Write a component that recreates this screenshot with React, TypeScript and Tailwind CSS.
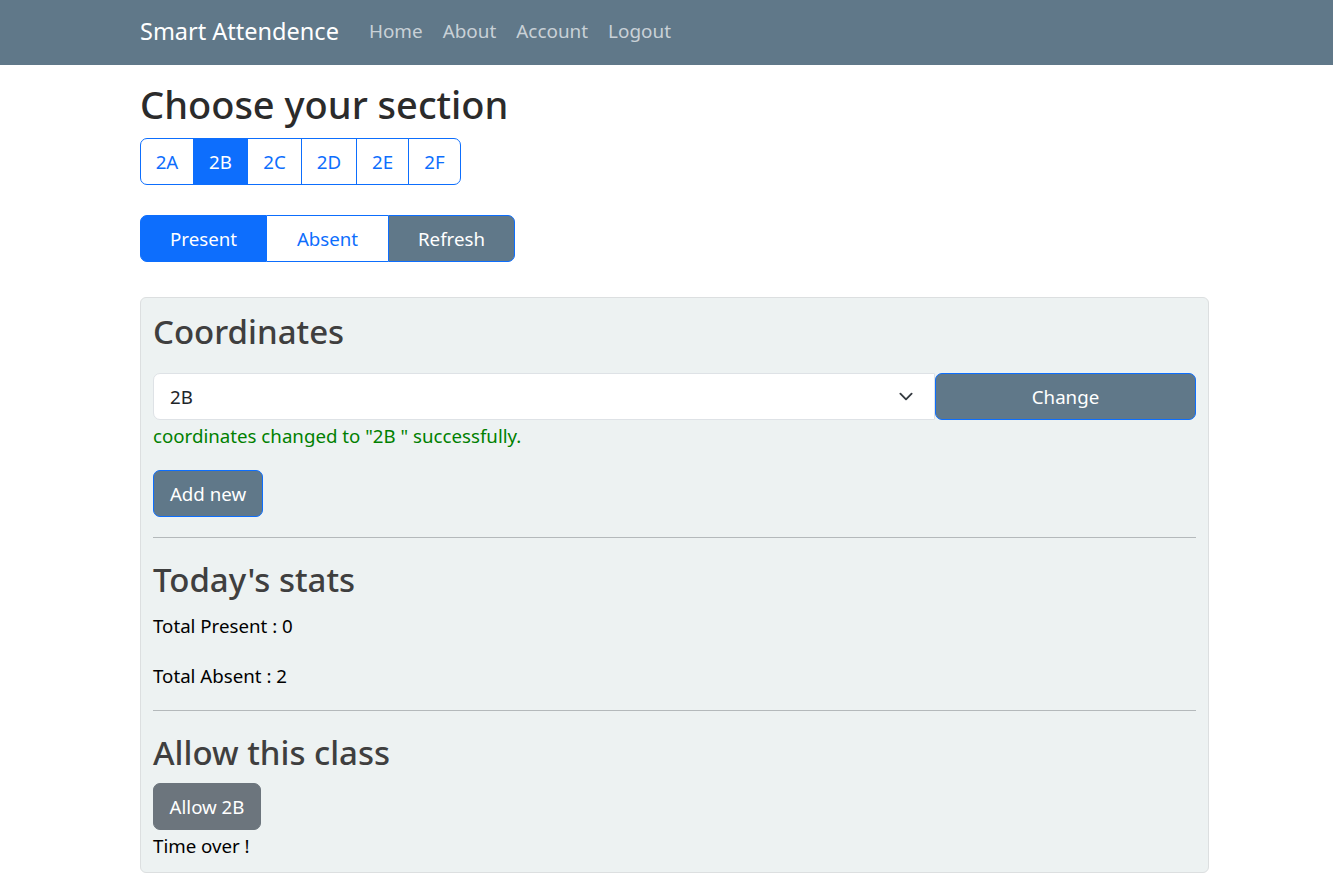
import React from "react";

const font = { fontFamily: '"Noto Sans", "Open Sans", sans-serif' };

function Chevron() {
  return (
    <svg width="20" height="15" viewBox="0 0 16 16" className="shrink-0">
      <path d="m2 5 6 6 6-6" fill="none" stroke="#343a40" strokeWidth="2" strokeLinecap="round" strokeLinejoin="round" />
    </svg>
  );
}

export default function App() {
  const sections = [
    { t: "2A", w: "w-[54px]" },
    { t: "2B", w: "w-[55px]" },
    { t: "2C", w: "w-[55px]" },
    { t: "2D", w: "w-[56px]" },
    { t: "2E", w: "w-[53px]" },
    { t: "2F", w: "w-[53px]" },
  ];
  return (
    <div className="min-h-[894px] bg-white text-[18.7px] leading-[30px] text-[#212529]" style={font}>
      <nav className="h-[65px] bg-[#607889] flex items-center">
        <div className="ml-[140px] flex items-center mb-[3px]">
          <span className="text-[23.5px] leading-[37px] text-white mr-[20px]">Smart Attendence</span>
          <div className="flex items-center">
            {["Home", "About", "Account", "Logout"].map((l) => (
              <span key={l} className="px-[10px] text-[18.9px] leading-[30px] text-[#c9d1d7]">{l}</span>
            ))}
          </div>
        </div>
      </nav>

      <main className="ml-[140px] w-[1069px] pt-[15px]">
        <h2 className="text-[38px] pt-px leading-[47px] font-medium text-[#2b2b2b] mb-[10px]">Choose your section</h2>

        <div className="flex">
          {sections.map((s, i) => (
            <div
              key={s.t}
              className={
                "h-[47px] flex items-center justify-center border border-[#0d6efd] " +
                s.w +
                (i > 0 ? " -ml-px" : "") +
                (i === 0 ? " rounded-l-[7px]" : "") +
                (i === sections.length - 1 ? " rounded-r-[7px]" : "") +
                (s.t === "2B" ? " bg-[#0d6efd] text-white" : " bg-white text-[#0d6efd]")
              }
            >
              {s.t}
            </div>
          ))}
        </div>

        <div className="flex mt-[30px]">
          <div className="w-[127px] h-[47px] flex items-center justify-center bg-[#0d6efd] text-white border border-[#0d6efd] rounded-l-[7px]">Present</div>
          <div className="w-[121px] h-[47px] flex items-center justify-center bg-white text-[#0d6efd] border-y border-[#0d6efd]">Absent</div>
          <div className="w-[127px] h-[47px] flex items-center justify-center bg-[#607889] text-white border border-[#0d6efd] rounded-r-[7px]">Refresh</div>
        </div>

        <section className="mt-[35px] bg-[#edf2f2] border border-[#dcdfe0] rounded-[6px] px-[12px] pt-[12px] pb-[11px]">
          <h3 className="text-[33px] pt-[2px] leading-[40px] font-medium text-[#3f3f3f] mb-[21px]">Coordinates</h3>
          <div className="flex">
            <div className="flex-1 h-[47px] bg-white border border-[#dee2e6] rounded-l-[7px] flex items-center justify-between pl-[16px] pr-[18px]">
              <span>2B</span>
              <Chevron />
            </div>
            <div className="w-[261px] h-[47px] bg-[#607889] text-white border border-[#0d6efd] rounded-[7px] flex items-center justify-center">Change</div>
          </div>
          <p className="text-[#008000] mt-px">coordinates changed to "2B " successfully.</p>
          <div className="mt-[19px] w-[110px] h-[47px] bg-[#607889] text-white border border-[#0d6efd] rounded-[7px] flex items-center justify-center">Add new</div>
          <hr className="my-[20px] border-0 border-t border-[#b4b9bb]" />
          <h3 className="text-[33px] pt-[2px] leading-[40px] font-medium text-[#3f3f3f] mb-[10px]">Today's stats</h3>
          <p className="pt-px mb-[20px] text-black">Total Present : 0</p>
          <p className="mb-[19px] text-black">Total Absent : 2</p>
          <hr className="mb-[20px] border-0 border-t border-[#b4b9bb]" />
          <h3 className="text-[33px] pt-[2px] leading-[40px] font-medium text-[#3f3f3f] mb-[10px]">Allow this class</h3>
          <div className="w-[108px] h-[47px] bg-[#6c757d] text-white border border-[#6c757d] rounded-[7px] flex items-center justify-center">Allow 2B</div>
          <p className="mt-px text-black">Time over !</p>
        </section>
      </main>
    </div>
  );
}
